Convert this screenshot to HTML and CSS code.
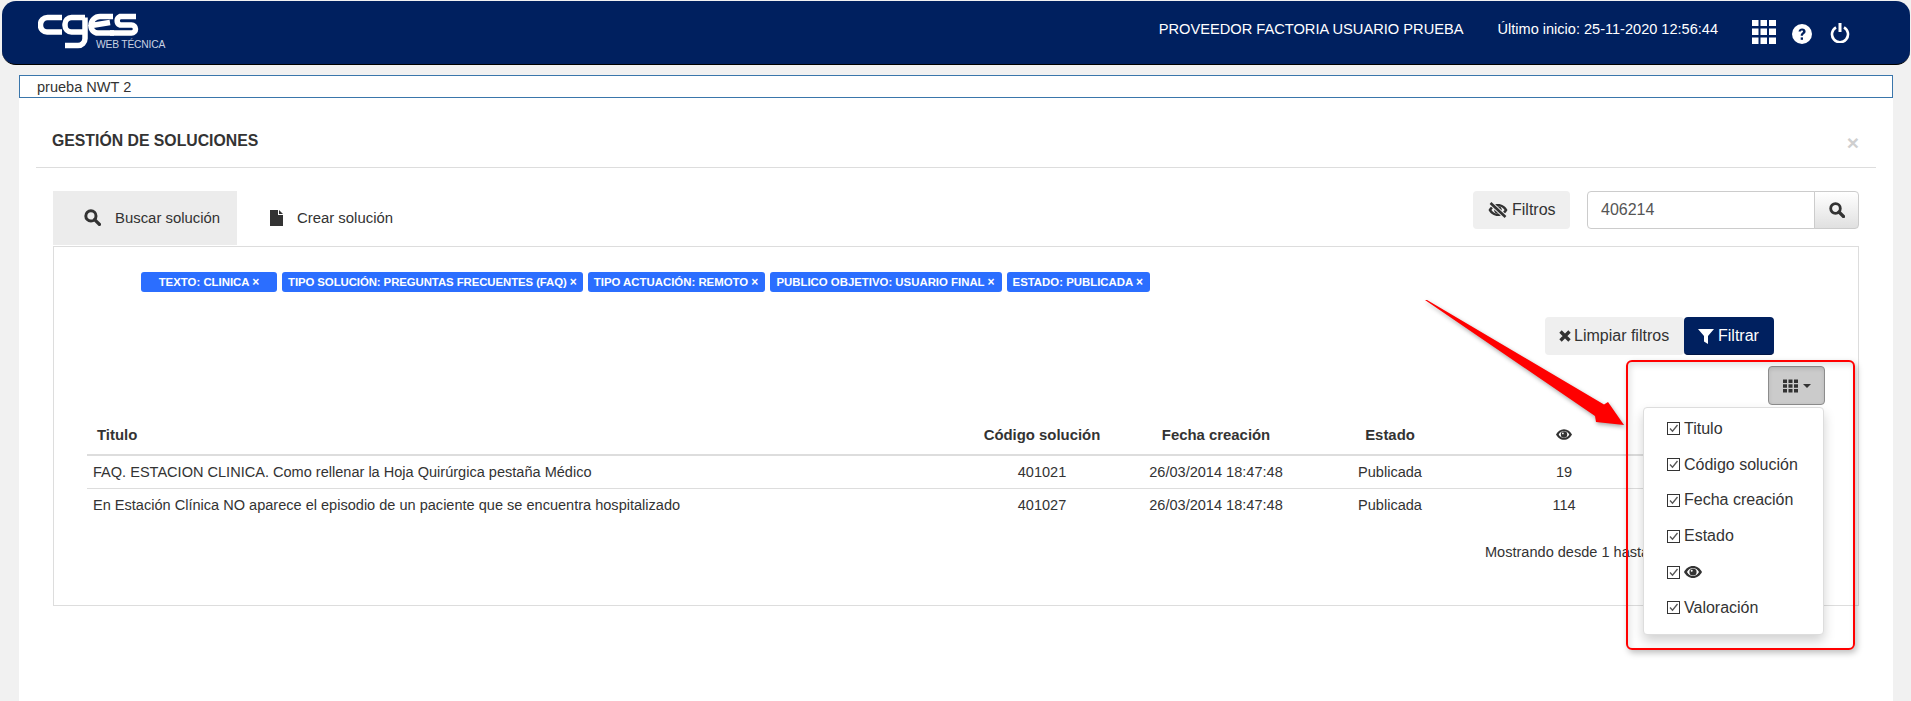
FILE: index.html
```html
<!DOCTYPE html>
<html lang="es">
<head>
<meta charset="utf-8">
<title>Gestión de soluciones</title>
<link rel="stylesheet" href="styles.css">
</head>
<body>
<svg class="sprites" width="0" height="0" aria-hidden="true">
  <symbol id="i-search" viewBox="0 0 16 16"><circle cx="6.5" cy="6.5" r="4.8" fill="none" stroke="currentColor" stroke-width="2.8"/><path d="M10 10l4.5 4.5" stroke="currentColor" stroke-width="3.2" stroke-linecap="round"/></symbol>
  <symbol id="i-eye" viewBox="0 0 18 12"><path fill-rule="evenodd" fill="currentColor" d="M9 0c4 0 7.300 2.600 9 6-1.700 3.400-5 6-9 6S1.700 9.400 0 6c1.700-3.400 5-6 9-6zm0 2C6.600 2 4.400 3.600 3 6c1.400 2.400 3.600 4 6 4s4.600-1.600 6-4c-1.400-2.400-3.600-4-6-4z"/><circle cx="9" cy="6" r="3.600" fill="currentColor"/><circle cx="7.700" cy="4.800" r="1" fill="#fff"/></symbol>
  <symbol id="i-check" viewBox="0 0 13 13"><rect x=".5" y=".5" width="12" height="12" fill="#fff" stroke="#333"/><path d="M3 6.500l2.500 2.700L10.500 3" fill="none" stroke="#555" stroke-width="1.300"/></symbol>
</svg>
<div class="page">
  <header class="topbar">
    <div class="brand">
      <svg class="logo" viewBox="0 0 104 36" aria-hidden="true">
        <g fill="none" stroke="#fff" stroke-width="5.500">
          <path d="M24 4.500H9.500a7 7 0 0 0-7 7v1a6.500 6.500 0 0 0 6.500 6.500H24"/>
          <path d="M47 4.500H33.500a6.500 6.500 0 0 0-6.500 6.500v1.500a6.500 6.500 0 0 0 6.500 6.500H47M47 4.500v21a7 7 0 0 1-7 7H27"/>
          <path d="M75 3.500H62a9 9 0 0 0-9 9 7 7 0 0 0 7 7.500h16M53.500 12.500L72 9.500"/>
          <path d="M98 3.500H82a4.600 4.600 0 0 0 0 8.500h11.500a4 4 0 0 1 0 8H72"/>
        </g>
      </svg>
      <span class="brand-sub">WEB TÉCNICA</span>
    </div>
    <div class="user">
      <span class="user-name">PROVEEDOR FACTORIA USUARIO PRUEBA</span>
      <span class="user-last">Último inicio: 25-11-2020 12:56:44</span>
    </div>
    <div class="top-icons">
      <svg class="ic-apps" viewBox="0 0 24 24" aria-hidden="true"><path fill="#fff" d="M0 0h6.500v6H0zM8.500 0H15v6H8.500zM17 0h7v6h-7zM0 8.500h6.500V15H0zM8.500 8.500H15V15H8.500zM17 8.500h7V15h-7zM0 17.500h6.500V24H0zM8.500 17.500H15V24H8.500zM17 17.500h7V24h-7z"/></svg>
      <svg class="ic-help" viewBox="0 0 20 20" aria-hidden="true"><circle cx="10" cy="10" r="10" fill="#fff"/><path d="M6.500 7.500c.3-2 1.700-3 3.600-3 2.100 0 3.500 1.200 3.500 2.900 0 2.400-2.700 2.500-2.700 4.300H8.700c0-3 2.300-2.900 2.300-4.200 0-.6-.4-1-1-1-.7 0-1 .4-1.200 1.100z" fill="#00205f"/><rect x="8.700" y="13.400" width="2.300" height="2.400" fill="#00205f"/></svg>
      <svg class="ic-power" viewBox="0 0 20 20" aria-hidden="true"><path d="M6 4.300a8 8 0 1 0 8 0" fill="none" stroke="#fff" stroke-width="2.600"/><rect x="8.500" y="0" width="3" height="9" fill="#fff"/></svg>
    </div>
  </header>

  <div class="notice">prueba NWT 2</div>

  <main class="card">
    <div class="card-head">
      <h1 class="card-title">GESTIÓN DE SOLUCIONES</h1>
      <span class="card-close">×</span>
    </div>
    <div class="card-body">
      <div class="toolbar">
        <nav class="tabs">
          <a class="tab tab-active"><svg class="tab-ic"><use href="#i-search"/></svg>Buscar solución</a>
          <a class="tab tab-plain"><svg class="tab-ic-file" viewBox="0 0 13 16" aria-hidden="true"><path fill="#333" d="M0 0h8v5h5v11H0zM9 0l4 4H9z"/></svg>Crear solución</a>
        </nav>
        <div class="search">
          <button class="btn btn-light btn-filtros"><svg class="ic-slash" viewBox="0 0 20 16" aria-hidden="true"><path fill-rule="evenodd" fill="#333" d="M10 2c4 0 7.700 2.500 9.500 6-1.800 3.500-5.500 6-9.500 6S2.300 11.500.5 8C2.300 4.500 6 2 10 2zm0 2.200C7.200 4.200 4.900 5.800 3.400 8c1.500 2.200 3.800 3.800 6.600 3.800s5.100-1.600 6.600-3.800C15.100 5.800 12.800 4.200 10 4.200z"/><circle cx="10" cy="8" r="3.800" fill="#333"/><path d="M2.500 1l15 14" stroke="#efefef" stroke-width="4.500"/><path d="M2.500 1l15 14" stroke="#333" stroke-width="2.600"/></svg>Filtros</button>
          <div class="search-group">
            <span class="search-input">406214</span>
            <span class="search-btn"><svg class="search-ic"><use href="#i-search"/></svg></span>
          </div>
        </div>
      </div>

      <section class="panel">
        <div class="chips">
          <span class="chip chip-wide">TEXTO: CLINICA <b class="chip-x">×</b></span>
          <span class="chip chip-tight">TIPO SOLUCIÓN: PREGUNTAS FRECUENTES (FAQ) <b class="chip-x">×</b></span>
          <span class="chip">TIPO ACTUACIÓN: REMOTO <b class="chip-x">×</b></span>
          <span class="chip">PUBLICO OBJETIVO: USUARIO FINAL <b class="chip-x">×</b></span>
          <span class="chip">ESTADO: PUBLICADA <b class="chip-x">×</b></span>
        </div>
        <div class="actions">
          <button class="btn btn-light btn-clear"><svg class="ic-x" viewBox="0 0 12 12" aria-hidden="true"><path d="M1.500 1.500l9 9M10.500 1.500l-9 9" stroke="#333" stroke-width="3.400"/></svg>Limpiar filtros</button>
          <button class="btn btn-navy"><svg class="ic-funnel" viewBox="0 0 16 16" aria-hidden="true"><path fill="#fff" d="M0 1h16L10 8v8L6 13.500V8z"/></svg>Filtrar</button>
        </div>
        <div class="col-bar">
          <button class="col-btn"><svg class="ic-th" viewBox="0 0 15 13" aria-hidden="true"><path fill="#333" d="M0 0h4v3.500H0zM5.500 0h4v3.500h-4zM11 0h4v3.500h-4zM0 4.800h4v3.500H0zM5.500 4.800h4v3.500h-4zM11 4.800h4v3.500h-4zM0 9.500h4V13H0zM5.500 9.500h4V13h-4zM11 9.500h4V13h-4z"/></svg><i class="caret"></i></button>
        </div>
        <table class="grid">
          <colgroup><col class="c-title"><col class="c-n"><col class="c-n"><col class="c-n"><col class="c-n"><col class="c-last"></colgroup>
          <thead>
            <tr>
              <th class="th-title">Titulo</th>
              <th>Código solución</th>
              <th>Fecha creación</th>
              <th>Estado</th>
              <th><svg class="ic-eye"><use href="#i-eye"/></svg></th>
              <th></th>
            </tr>
          </thead>
          <tbody>
            <tr>
              <td class="td-title">FAQ. ESTACION CLINICA. Como rellenar la Hoja Quirúrgica pestaña Médico</td>
              <td>401021</td><td>26/03/2014 18:47:48</td><td>Publicada</td><td>19</td><td></td>
            </tr>
            <tr>
              <td class="td-title">En Estación Clínica NO aparece el episodio de un paciente que se encuentra hospitalizado</td>
              <td>401027</td><td>26/03/2014 18:47:48</td><td>Publicada</td><td>114</td><td></td>
            </tr>
          </tbody>
        </table>
        <p class="pager">Mostrando desde 1 hasta 2 de 2</p>
      </section>
    </div>
  </main>

  <ul class="col-menu">
    <li class="col-item"><svg class="ic-check"><use href="#i-check"/></svg>Titulo</li>
    <li class="col-item"><svg class="ic-check"><use href="#i-check"/></svg>Código solución</li>
    <li class="col-item"><svg class="ic-check"><use href="#i-check"/></svg>Fecha creación</li>
    <li class="col-item"><svg class="ic-check"><use href="#i-check"/></svg>Estado</li>
    <li class="col-item"><svg class="ic-check"><use href="#i-check"/></svg><svg class="ic-eye-menu"><use href="#i-eye"/></svg></li>
    <li class="col-item"><svg class="ic-check"><use href="#i-check"/></svg>Valoración</li>
  </ul>

  <div class="mark-box"></div>
  <svg class="mark-arrow" viewBox="0 0 204 130" aria-hidden="true"><polygon fill="#f00" points="0,0 2,0 179,104.500 183,102 199,125 171,122 170,116"/></svg>
</div>
</body>
</html>
```
FILE: styles.css
```css
* { box-sizing: border-box; }
html, body { margin: 0; height: 100%; }
body {
  background: #f1f1f1;
  color: #333;
  font: 14.550px/20px "Liberation Sans", Arial, sans-serif;
  overflow: hidden;
}
.sprites { position: absolute; }
.page { position: relative; height: 701px; overflow: hidden; }

.topbar {
  display: flex;
  align-items: center;
  height: 64px;
  margin: 1px 1px 0 2px;
  padding: 0 60px 0 36px;
  background: #00205f;
  border-bottom: 1px solid #000;
  border-radius: 14px;
  color: #fff;
}
.brand { position: relative; width: 130px; height: 46px; margin-top: 6px; }
.logo { display: block; width: 104px; height: 36px; }
.brand-sub {
  position: absolute;
  left: 58px;
  top: 25px;
  font-size: 10.300px;
  line-height: 14px;
  letter-spacing: -.2px;
  color: #c9d2e2;
  white-space: nowrap;
}
.user { display: flex; gap: 34px; margin-left: auto; margin-top: -8px; }
.user-name { font-size: 14.650px; }
.top-icons { display: flex; align-items: center; gap: 16px; margin-left: 34px; margin-top: -2px; }
.ic-apps { width: 24px; height: 24px; }
.ic-help { width: 20px; height: 20px; margin-top: 4px; }
.ic-power { width: 20px; height: 20px; margin-top: 3px; margin-left: 2px; }

.notice {
  height: 23px;
  margin: 10px 18px 0 19px;
  padding-left: 17px;
  background: #fff;
  border: 1px solid #3a76ab;
  line-height: 23px;
}

.card { margin: 0 18px 0 19px; padding: 0 17px; background: #fff; height: 604px; }
.card-head {
  display: flex;
  justify-content: space-between;
  align-items: center;
  height: 70px;
  padding: 17px 0 0 16px;
  border-bottom: 1px solid #ddd;
}
.card-title { margin: 0; font-size: 15.800px; line-height: 20px; font-weight: 700; }
.card-close { margin-right: 17px; margin-top: 2px; font: 700 21px/21px "Liberation Sans", Arial, sans-serif; color: #cfcfcf; }
.card-body { padding: 23px 17px 0; }

.toolbar { display: flex; justify-content: space-between; height: 55px; }
.tabs { display: flex; }
.tab { display: flex; align-items: center; height: 54px; padding-bottom: 1px; color: #333; font-size: 14.900px; }
.tab-active { width: 184px; padding-left: 31px; background: #ececec; }
.tab-plain { padding-left: 33px; }
.tab-ic { width: 17px; height: 17px; margin-right: 14px; }
.tab-ic-file { width: 13px; height: 16px; margin-right: 14px; }
.search { display: flex; gap: 17px; height: 38px; }
.search-group { display: flex; width: 272px; }
.search-input {
  flex: 1;
  padding-left: 13px;
  border: 1px solid #ccc;
  border-radius: 4px 0 0 4px;
  font-size: 16px;
  line-height: 36px;
  color: #555;
}
.search-btn {
  display: flex;
  align-items: center;
  justify-content: center;
  width: 45px;
  margin-left: -1px;
  border: 1px solid #ccc;
  border-radius: 0 4px 4px 0;
  background: linear-gradient(#fff, #e0e0e0);
}
.search-ic { width: 16px; height: 16px; }

.btn {
  display: inline-flex;
  align-items: center;
  height: 38px;
  border: 0;
  border-radius: 4px;
  font: inherit;
  font-size: 16px;
}
.btn-light { background: #efefef; color: #333; }
.btn-filtros { width: 97px; padding-left: 15px; }
.ic-slash { width: 20px; height: 16px; margin-right: 4px; }
.btn-clear { width: 139px; padding-left: 14px; }
.ic-x { width: 12px; height: 12px; margin-right: 3px; }
.btn-navy {
  width: 90px;
  padding-left: 14px;
  background: #00205f;
  border-bottom: 1px solid #001544;
  color: #fff;
}
.ic-funnel { width: 16px; height: 16px; margin-right: 4px; }

.panel { height: 360px; border: 1px solid #ddd; }
.chips { display: flex; gap: 5px; margin: 25px 0 0 87px; }
.chip {
  display: block;
  height: 20px;
  padding: 0 7px 0 6px;
  background: #2b6eff;
  border-radius: 3px;
  color: #fff;
  font-size: 11.400px;
  font-weight: 700;
  line-height: 20px;
  white-space: nowrap;
}
.chip-wide { width: 136px; padding: 0 6px; text-align: center; }
.chip-tight { padding: 0 6px; letter-spacing: -.08px; }
.chip-x { font-size: 12px; }
.actions { display: flex; justify-content: flex-end; margin-top: 25px; padding-right: 84px; }
.col-bar { display: flex; justify-content: flex-end; margin-top: 11px; padding-right: 33px; }
.col-btn {
  display: flex;
  align-items: center;
  justify-content: center;
  gap: 5px;
  width: 57px;
  height: 39px;
  padding: 0;
  border: 1px solid #8c8c8c;
  border-radius: 4px;
  background: #cbcbcb;
  box-shadow: inset 0 2px 4px rgba(0,0,0,.1);
}
.ic-th { width: 15px; height: 14px; }
.caret { border-top: 4px solid #333; border-left: 4px solid transparent; border-right: 4px solid transparent; }

.grid {
  table-layout: fixed;
  width: 1736px;
  margin-left: 33px;
  border-collapse: collapse;
}
.c-title { width: 868px; }
.c-n { width: 174px; }
.c-last { width: 172px; }
.grid th {
  height: 50px;
  padding: 10px 0 0;
  border-bottom: 2px solid #ddd;
  font-size: 14.900px;
  font-weight: 700;
  text-align: center;
}
.grid td { height: 33px; padding: 0; text-align: center; }
.grid tbody tr:first-child td { border-bottom: 1px solid #ddd; }
.grid .th-title { padding-left: 10px; text-align: left; }
.grid .td-title { padding-left: 6px; text-align: left; }
.ic-eye { width: 16px; height: 11px; }
.pager { margin: 21px 0 0 1431px; white-space: nowrap; }

.col-menu {
  position: absolute;
  left: 1643px;
  top: 407px;
  width: 181px;
  height: 228px;
  margin: 0;
  padding: 3px 0 0 23px;
  list-style: none;
  background: #fff;
  border: 1px solid #ddd;
  border-radius: 4px;
  box-shadow: 0 6px 12px rgba(0,0,0,.18);
  font-size: 16px;
}
.col-item { display: flex; align-items: center; height: 35.800px; }
.ic-check { width: 13px; height: 13px; margin-right: 4px; }
.ic-eye-menu { width: 18px; height: 12px; }

.mark-box {
  position: absolute;
  left: 1626px;
  top: 360px;
  width: 229px;
  height: 290px;
  border: 2px solid #f00;
  border-radius: 6px;
  box-shadow: 2px 3px 6px rgba(0,0,0,.25), inset 2px 3px 6px rgba(0,0,0,.12);
}
.mark-arrow {
  position: absolute;
  left: 1425px;
  top: 300px;
  width: 204px;
  height: 130px;
  filter: drop-shadow(1px 2px 2px rgba(0,0,0,.35));
}
```
